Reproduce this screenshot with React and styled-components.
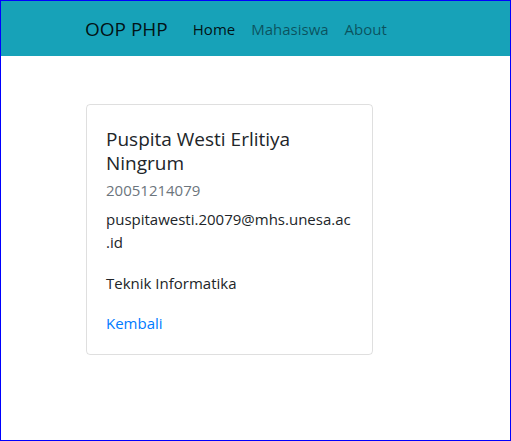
import styled, {createGlobalStyle} from 'styled-components';

const GlobalStyle = createGlobalStyle`
  html, body {
    margin: 0;
    padding: 0;
    background: #fff;
  }
  body {
    font-family: "Open Sans", "Noto Sans", sans-serif;
    color: #212529;
  }
  * {
    box-sizing: border-box;
  }
`;

const Page = styled.div`
  width: 511px;
  height: 441px;
  border: 1px solid #0000ff;
  overflow: hidden;
`;

const Navbar = styled.nav`
  display: flex;
  align-items: center;
  height: 55px;
  padding-left: 84px;
  background: #17a2b8;
`;

const Brand = styled.a`
  font-size: 19px;
  line-height: 30px;
  margin-right: 17px;
  color: rgba(0, 0, 0, 0.9);
  text-decoration: none;
`;

const NavLink = styled.a`
  font-size: 15px;
  line-height: 24px;
  padding: 8px;
  color: ${({$active}) => ($active ? 'rgba(0, 0, 0, 0.9)' : 'rgba(0, 0, 0, 0.5)')};
  text-decoration: none;
`;

const Container = styled.main`
  padding: 48px 0 0 85px;
`;

const Card = styled.div`
  width: 287px;
  padding: 22px 20px 19px 19px;
  border: 1px solid rgba(0, 0, 0, 0.125);
  border-radius: 4px;
  overflow-wrap: break-word;
`;

const Title = styled.h5`
  margin: 0 0 9px;
  font-size: 19px;
  font-weight: 400;
  line-height: 24px;
`;

const Subtitle = styled.h6`
  margin: -6px 0 6px;
  font-size: 15px;
  font-weight: 400;
  line-height: 24px;
  color: #6c757d;
`;

const Text = styled.p`
  margin: 0 0 ${({$space}) => $space || 18}px;
  font-size: 15px;
  line-height: 23px;
`;

const CardLink = styled.a`
  display: block;
  font-size: 15px;
  line-height: 24px;
  color: #007bff;
  text-decoration: none;
`;

const links = [
  {label: 'Home', active: true},
  {label: 'Mahasiswa'},
  {label: 'About'},
];

const App = () => (
  <Page>
    <GlobalStyle />
    <Navbar>
      <Brand href="#">OOP PHP</Brand>
      {links.map((link) => (
        <NavLink key={link.label} href="#" $active={link.active}>
          {link.label}
        </NavLink>
      ))}
    </Navbar>
    <Container>
      <Card>
        <Title>Puspita Westi Erlitiya Ningrum</Title>
        <Subtitle>20051214079</Subtitle>
        <Text>puspitawesti.20079@mhs.unesa.ac.id</Text>
        <Text $space={16}>Teknik Informatika</Text>
        <CardLink href="#">Kembali</CardLink>
      </Card>
    </Container>
  </Page>
);

export default App;
